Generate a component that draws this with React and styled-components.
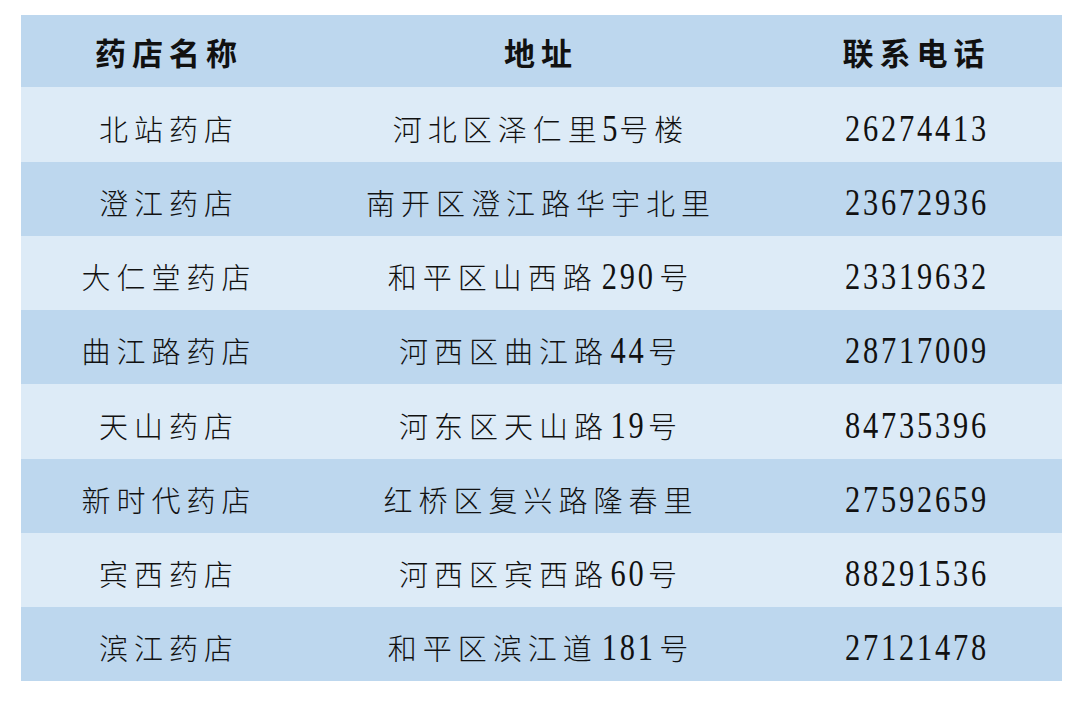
import React from "react";
import styled, { createGlobalStyle } from "styled-components";

const Global = createGlobalStyle`
  html, body { margin: 0; padding: 0; background: #ffffff; }
  body { font-family: "Noto Sans CJK SC", "Liberation Serif", serif; }
`;

const Page = styled.div`
  width: 1080px;
  height: 701px;
  padding: 15px 0 0 21px;
  box-sizing: border-box;
`;

const Table = styled.div`
  width: 1041px;
  display: flex;
  flex-direction: column;
`;

const Row = styled.div`
  display: grid;
  grid-template-columns: 290px 454px 297px;
  height: ${(p) => p.$h}px;
  background: ${(p) => (p.$dark ? "#bdd7ee" : "#ddebf7")};
`;

const Cell = styled.div`
  display: flex;
  align-items: center;
  justify-content: center;
  color: #111111;
  font-family: "Noto Sans CJK SC", sans-serif;
  font-size: ${(p) => (p.$head ? 31 : 29)}px;
  font-weight: ${(p) => (p.$head ? 700 : 300)};
  letter-spacing: 6px;
  padding-left: 6px;
  padding-top: ${(p) => (p.$head ? 0 : 6)}px;
  white-space: nowrap;
`;

const Num = styled.span`
  font-family: "Liberation Serif", "Times New Roman", serif;
  font-size: 38px;
  letter-spacing: 3.5px;
  display: inline-block;
  transform: scaleX(0.8);
  margin: 0 ${(p) => (p.$inline ? -3 : 0)}px;
`;

const rows = [
  ["北站药店", "河北区泽仁里5号楼", "26274413"],
  ["澄江药店", "南开区澄江路华宇北里", "23672936"],
  ["大仁堂药店", "和平区山西路290号", "23319632"],
  ["曲江路药店", "河西区曲江路44号", "28717009"],
  ["天山药店", "河东区天山路19号", "84735396"],
  ["新时代药店", "红桥区复兴路隆春里", "27592659"],
  ["宾西药店", "河西区宾西路60号", "88291536"],
  ["滨江药店", "和平区滨江道181号", "27121478"],
];

const renderMixed = (s) => {
  const parts = s.split(/(\d+)/).filter(Boolean);
  return parts.map((p, i) =>
    /\d/.test(p) ? (
      <Num key={i} $inline>
        {p}
      </Num>
    ) : (
      <span key={i}>{p}</span>
    )
  );
};

export default function App() {
  return (
    <Page>
      <Global />
      <Table>
        <Row $dark $h={72}>
          <Cell $head>药店名称</Cell>
          <Cell $head>地址</Cell>
          <Cell $head>联系电话</Cell>
        </Row>
        {rows.map((r, i) => (
          <Row key={i} $dark={i % 2 === 1} $h={i % 4 === 0 ? 75 : 74}>
            <Cell>{r[0]}</Cell>
            <Cell>{renderMixed(r[1])}</Cell>
            <Cell>
              <Num>{r[2]}</Num>
            </Cell>
          </Row>
        ))}
      </Table>
    </Page>
  );
}
